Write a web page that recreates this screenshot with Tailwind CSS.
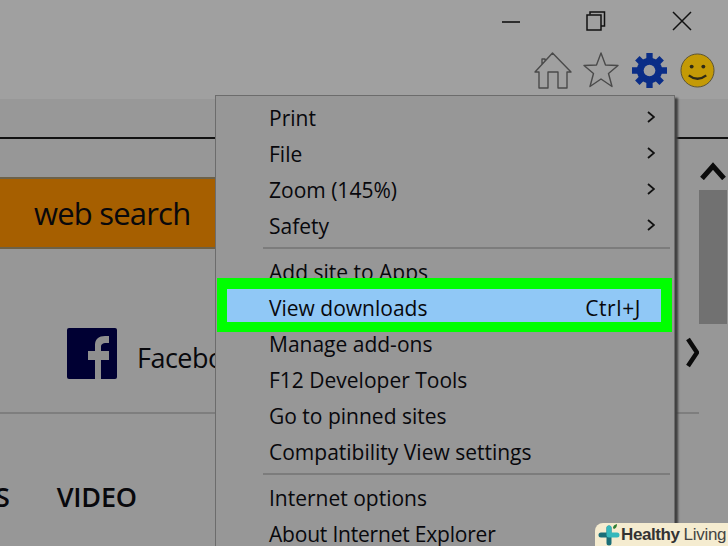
<!DOCTYPE html>
<html lang="en">
<head>
  <meta charset="UTF-8" />
  <title>View downloads</title>
  <script src="https://cdn.jsdelivr.net/npm/@tailwindcss/browser@4"></script>
</head>
<body class="w-[728px] h-[546px] overflow-hidden bg-[#979797] font-['Open_Sans','Noto_Sans',sans-serif] text-[#08080c]">
  <div class="relative w-[728px] h-[546px] overflow-hidden">

    <!-- Window top -->
    <header class="h-[99px] bg-[#a0a0a0] flex flex-col items-end">
      <div class="h-[42px] flex items-center">
        <svg class="w-[20px] h-[20px] mr-[64px]" viewBox="0 0 20 20"><path d="M0 11h18" stroke="#111" stroke-width="1.6"/></svg>
        <svg class="w-[20px] h-[20px] mr-[66px]" viewBox="0 0 20 20" fill="none" stroke="#111" stroke-width="1.5"><path d="M4 3.5V1h14.500v14H15"/><rect x="1" y="4" width="14" height="15"/></svg>
        <svg class="w-[20px] h-[20px] mr-[36px]" viewBox="0 0 20 20"><path d="M1 1l18 18M19 1L1 19" stroke="#111" stroke-width="1.500"/></svg>
      </div>
      <div class="flex items-center pr-[13px] pt-[10px]">
        <svg class="w-[38px] h-[37px] mr-[11px]" viewBox="0 0 38 37" fill="none" stroke="#4a4a4a" stroke-width="1.400" stroke-linejoin="round"><path d="M1 20L18.500 1 37 20h-4v16H24V20H14v16H5V20zM8 12V7h3v1.500"/></svg>
        <svg class="w-[36px] h-[37px] mr-[13px]" viewBox="0 0 36 37" fill="none" stroke="#4a4a4a" stroke-width="1.400" stroke-linejoin="round"><path d="M18 1l4.500 12 12.500.5-9.500 8 3.500 13-11-7.500-11 7.500 3.500-13L1 13.500l12.500-.5z"/></svg>
        <svg class="w-[35px] h-[35px] mr-[13px]" viewBox="0 0 36 36"><circle cx="18" cy="18" r="9.500" fill="none" stroke="#0a2d87" stroke-width="7"/><path d="M18 0v36M0 18h36M5.500 5.500l25 25M30.500 5.500l-25 25" stroke="#0a2d87" stroke-width="6.500"/><circle cx="18" cy="18" r="6" fill="#a0a0a0"/></svg>
        <svg class="w-[35px] h-[35px]" viewBox="0 0 36 36"><circle cx="18" cy="18" r="17" fill="#c49a06" stroke="#5a5232" stroke-width="1"/><circle cx="12" cy="14" r="2" fill="#2e2a16"/><circle cx="24" cy="14" r="2" fill="#2e2a16"/><path d="M9 23q9 7 18 0" fill="none" stroke="#2e2a16" stroke-width="2.400"/></svg>
      </div>
    </header>

    <!-- Page behind menu -->
    <div class="h-[40px] bg-[#989898] border-b-2 border-[#111]"></div>
    <div class="flex">
      <main class="w-[699px]">
        <div class="h-[38px]"></div>
        <div class="w-[650px] h-[72px] bg-[#a65f00] border-y-2 border-[#6c6148] flex items-center pl-[34px] text-[31px] tracking-[-0.8px] leading-none">web search</div>
        <div class="h-[79px]"></div>
        <div class="flex items-center justify-between h-[51px] pl-[67px]">
          <div class="flex items-center gap-[20px]">
            <svg class="w-[50px] h-[51px]" viewBox="0 0 50 51"><rect width="50" height="51" rx="2" fill="#000033"/><path d="M28 51V32h-7v-9h7v-6c0-6 4-9 10-9h4v7h-3c-3 0-5 1-5 4v4h8v9h-8v19z" fill="#8f8f8f"/></svg>
            <span class="text-[27px] tracking-[-0.5px] leading-none pt-[8px]">Facebook</span>
          </div>
          <svg class="w-[13px] h-[31px] mb-[3px]" viewBox="0 0 13 31"><path d="M2 2l9 13.500L2 29" fill="none" stroke="#0b0b0b" stroke-width="4.500"/></svg>
        </div>
        <div class="h-[33px]"></div>
        <div class="border-t-2 border-[#7e7e7e] h-[71px]"></div>
        <div class="flex gap-[47px] ml-[-5px] text-[27px] tracking-[-0.2px] font-semibold leading-none">
          <span>S</span>
          <span>VIDEO</span>
        </div>
      </main>
      <aside class="w-[29px] pt-[23px]">
        <svg class="w-[26px] h-[18px] ml-[1px] mb-[10px]" viewBox="0 0 26 18"><path d="M2 16.500L13 4l11 12.500" fill="none" stroke="#0b0b0b" stroke-width="5"/></svg>
        <div class="w-[28px] h-[134px] bg-[#717171]"></div>
      </aside>
    </div>

    <!-- Menu -->
    <nav class="absolute left-[215px] top-[95px] w-[460px] h-[470px] bg-[#979797] border border-[#6c6c6c] shadow-[3px_3px_2px_#404040] pt-[4px] text-[21px] leading-[36px]">
      <ul class="pl-[53px] pr-[19px]">
        <li class="flex justify-between items-center h-[36px]">Print<svg class="w-[8px] h-[14px] mb-[2px]" viewBox="0 0 8 14"><path d="M1 2l6 5-6 5" fill="none" stroke="#111" stroke-width="1.800"/></svg></li>
        <li class="flex justify-between items-center h-[36px]">File<svg class="w-[8px] h-[14px] mb-[2px]" viewBox="0 0 8 14"><path d="M1 2l6 5-6 5" fill="none" stroke="#111" stroke-width="1.800"/></svg></li>
        <li class="flex justify-between items-center h-[36px]">Zoom (145%)<svg class="w-[8px] h-[14px] mb-[2px]" viewBox="0 0 8 14"><path d="M1 2l6 5-6 5" fill="none" stroke="#111" stroke-width="1.800"/></svg></li>
        <li class="flex justify-between items-center h-[36px]">Safety<svg class="w-[8px] h-[14px] mb-[2px]" viewBox="0 0 8 14"><path d="M1 2l6 5-6 5" fill="none" stroke="#111" stroke-width="1.800"/></svg></li>
      </ul>
      <div class="ml-[47px] mr-[4px] mt-[3px] mb-[5px] h-[2px] bg-[#7c7c7c]"></div>
      <div class="pl-[53px] h-[36px]">Add site to Apps</div>
      <div class="relative pl-[53px] h-[36px]">
        <!-- Highlighted row -->
        <div class="absolute left-[1px] top-[-12px] w-[455px] h-[54px] border-[10px] border-t-[11px] border-r-[11px] border-[#00ff00] bg-[#90c8f6] flex items-center justify-between pl-[42px] pr-[20px] pt-[5px]">
          <span>View downloads</span><span class="tracking-[0.6px]">Ctrl+J</span>
        </div>
      </div>
      <div class="pl-[53px] h-[36px]">Manage add-ons</div>
      <div class="pl-[53px] h-[36px]">F12 Developer Tools</div>
      <div class="pl-[53px] h-[36px]">Go to pinned sites</div>
      <div class="pl-[53px] h-[36px]">Compatibility View settings</div>
      <div class="ml-[47px] mr-[4px] mt-[3px] mb-[5px] h-[2px] bg-[#7c7c7c]"></div>
      <div class="pl-[53px] h-[36px]">Internet options</div>
      <div class="pl-[53px] h-[36px] tracking-[-0.2px]">About Internet Explorer</div>
    </nav>

    <!-- Watermark -->
    <div class="absolute right-0 bottom-0 w-[133px] h-[23px] bg-[#f5ecd0] rounded-tl-[8px] flex items-center pl-[3px] font-['Liberation_Sans',sans-serif] text-[17px]">
      <svg class="w-[22px] h-[23px] shrink-0" viewBox="0 0 22 23">
        <path d="M15 5q0-3 4-4 0 4-3 5z" fill="#2f7d32"/>
        <path d="M3 12h8M11 5v15" stroke="#1b6e78" stroke-width="5" stroke-linecap="round"/>
        <path d="M11 12h8M11 5v7" stroke="#35b8bc" stroke-width="5" stroke-linecap="round"/>
      </svg>
      <span class="font-bold text-[#333] tracking-[-0.400px] ml-[1px]">Healthy</span><span class="text-[#444] tracking-[-0.300px] ml-[4px]">Living</span>
    </div>
  </div>
</body>
</html>
